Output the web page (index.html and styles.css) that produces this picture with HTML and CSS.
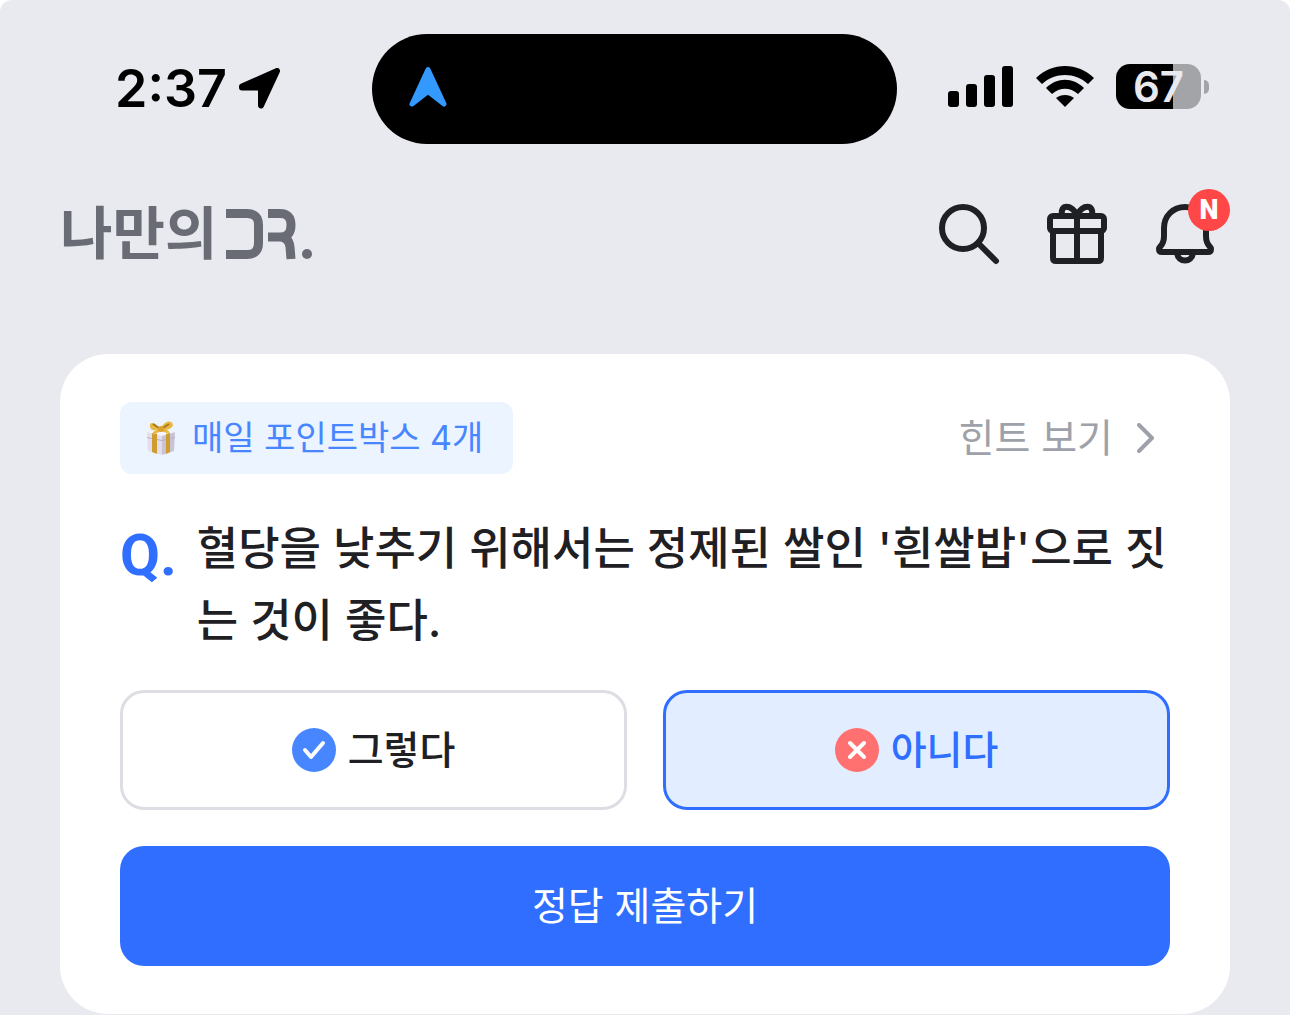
FILE: index.html
```
<!DOCTYPE html>
<html lang="ko">
<head>
  <meta charset="utf-8">
  <title>나만의DR.</title>
  <meta name="viewport" content="width=device-width, initial-scale=1.0">
  <link rel="stylesheet" href="styles.css">
</head>
<body>
  <div class="status-bar">
    <div class="status-left">
      <span class="time">2:37</span>
      <svg class="location" width="42" height="42" viewBox="0 0 42 42"><path d="M3 18.500 38 3 22 37.500V19.500H3z" fill="#000" stroke="#000" stroke-width="6" stroke-linejoin="round"/></svg>
    </div>
    <div class="island">
      <svg width="38" height="42" viewBox="0 0 38 42"><path d="M19 3.500 3 38 19 25.500 35 38z" fill="#3399ff" stroke="#3399ff" stroke-width="5" stroke-linejoin="round"/></svg>
    </div>
    <div class="status-right">
      <svg width="66" height="42" viewBox="0 0 66 42">
        <rect x="0" y="25" width="11" height="16" rx="3"/>
        <rect x="18" y="18" width="11" height="23" rx="3"/>
        <rect x="36" y="9" width="11" height="32" rx="3"/>
        <rect x="54" y="0" width="11" height="41" rx="3"/>
      </svg>
      <svg class="wifi" width="58" height="42" viewBox="0 0 58 42">
        <path d="M0 12C16-4 42-4 58 12L52 18C39 6 19 6 6 18z"/>
        <path d="M10 22C21 11 37 11 48 22L42 28C34 21 24 21 16 28z"/>
        <path d="M20 32C25 28 33 28 38 32L29 41z"/>
      </svg>
      <div class="battery"><span>67</span></div>
      <div class="battery-tip"></div>
    </div>
  </div>

  <header class="header">
    <a class="logo" href="#" aria-label="나만의DR.">
      <span>나만의</span>
      <svg width="90" height="56" viewBox="0 0 90 56" fill="none" stroke="#696c75" stroke-width="9">
        <path d="M2 7.500H23Q34.500 7.500 34.500 19V37Q34.500 48.500 23 48.500H2"/>
        <path d="M44 7.500H56Q67 7.500 67 19Q67 31 56 31H44M55 31Q65 31 66 41L67 53"/>
        <circle cx="83" cy="48" r="5" fill="#696c75" stroke="none"/>
      </svg>
    </a>
    <nav class="header-icons">
      <button class="icon-btn" aria-label="검색">
        <svg width="72" height="72" viewBox="0 0 72 72"><circle cx="30" cy="30" r="21"/><path d="M45 45 63 63"/></svg>
      </button>
      <button class="icon-btn" aria-label="선물">
        <svg width="72" height="72" viewBox="0 0 72 72">
          <rect x="9" y="18" width="54" height="15" rx="3"/>
          <path d="M12 33V60Q12 63 15 63H57Q60 63 60 60V33M36 18V63M21 17C19 6 30 6 36 17M51 17C53 6 42 6 36 17"/>
        </svg>
      </button>
      <button class="icon-btn" aria-label="알림">
        <svg width="72" height="72" viewBox="0 0 72 72">
          <path d="M36 9C24 9 15 18 15 30V38C15 48 10 48 10 51Q10 54 13 54H59Q62 54 62 51C62 48 57 48 57 38V30C57 18 48 9 36 9z"/>
          <path d="M28 55C29 65 43 65 44 55"/>
        </svg>
        <span class="badge">N</span>
      </button>
    </nav>
  </header>

  <main class="quiz-card">
    <div class="quiz-top">
      <div class="point-chip">
        <svg width="30" height="36" viewBox="0 0 30 36">
          <path d="M1 12 16 15V35L2 31z" fill="#e2ddef"/>
          <path d="M16 15 29 12 28 31 16 35z" fill="#c9c3d6"/>
          <path d="M1 12 14 10 29 12 16 16z" fill="#f7f5fc"/>
          <path d="M1 17 16 20 29 17V18L16 21 1 18z" fill="#b9b3c6"/>
          <path d="M6 13 11 14V34L6 32zM20 14 24 13V32L20 34z" fill="#cf9d2e"/>
          <path d="M14 9C8 0 1 2 5 9C6 11 10 10 14 9C9 10 6 12 7 15L15 11 24 14C24 11 20 9 16 9C20 11 26 9 27 5C26-1 18 1 15 8z" fill="#e8b842"/>
          <path d="M13 8 7 4M17 8 23 4" stroke="#a87819" stroke-width="2"/>
          <circle cx="15" cy="9" r="3" fill="#d8a32d"/>
        </svg>
        <span>매일 포인트박스 4개</span>
      </div>
      <a class="hint" href="#">힌트 보기
        <svg width="18" height="30" viewBox="0 0 18 30"><path d="M2 2 15 15 2 28"/></svg>
      </a>
    </div>

    <div class="question">
      <span class="q-mark">Q.</span>
      <p>혈당을 낮추기 위해서는 정제된 쌀인 '흰쌀밥'으로 짓는 것이 좋다.</p>
    </div>

    <div class="options">
      <button class="option">
        <svg width="44" height="44" viewBox="0 0 44 44"><circle cx="22" cy="22" r="22" fill="#4886ff"/><path d="M13 22 19 29 31 15"/></svg>
        그렇다
      </button>
      <button class="option selected">
        <svg width="44" height="44" viewBox="0 0 44 44"><circle cx="22" cy="22" r="22" fill="#ff7070"/><path d="M15 15 29 29M29 15 15 29"/></svg>
        아니다
      </button>
    </div>

    <button class="submit">정답 제출하기</button>
  </main>
</body>
</html>
```
FILE: styles.css
```
* {
  box-sizing: border-box;
}
html {
  background: #fff;
}
body {
  margin: 0;
  min-height: 100vh;
  background: #e9eaef;
  border-radius: 12px 12px 0 0;
  color: #1f2024;
  font-family: Inter, "Noto Sans CJK KR", sans-serif;
}
button {
  padding: 0;
  border: 0;
  background: none;
  color: inherit;
  font-family: inherit;
  cursor: pointer;
}
a {
  color: inherit;
  text-decoration: none;
}
svg {
  display: block;
  flex-shrink: 0;
}

/* status bar */
.status-bar {
  display: grid;
  grid-template-columns: 1fr 525px 1fr;
  padding: 34px 21px 0 0;
  color: #000;
  font-weight: 600;
}
.status-left {
  display: flex;
  align-items: center;
  gap: 12px;
  padding-left: 115px;
}
.time {
  font-size: 52px;
  line-height: 60px;
}
.island {
  display: flex;
  align-items: center;
  height: 110px;
  padding: 0 37px 4px;
  border-radius: 55px;
  background: #000;
}
.status-right {
  display: flex;
  align-items: center;
  justify-content: flex-end;
  padding: 0 60px 5px 0;
}
.wifi {
  margin: 0 22px;
}
.battery {
  width: 85px;
  height: 45px;
  border-radius: 14px;
  background: linear-gradient(90deg, #000 67%, #a3a4a8 67%);
  color: #e9eaef;
  font-size: 42px;
  line-height: 45px;
  text-align: center;
}
.battery-tip {
  width: 5px;
  height: 14px;
  margin-left: 3px;
  border-radius: 0 6px 6px 0;
  background: #a3a4a8;
}

/* header */
.header {
  display: flex;
  align-items: center;
  justify-content: space-between;
  padding: 54px 69px 84px 60px;
}
.logo {
  display: flex;
  align-items: center;
  gap: 7px;
  color: #696c75;
  font-size: 57px;
  font-weight: 700;
  line-height: 72px;
}
.header-icons {
  display: flex;
  gap: 36px;
}
.icon-btn {
  position: relative;
}
.icon-btn svg {
  fill: none;
  stroke: #1f2024;
  stroke-width: 6;
  stroke-linecap: round;
  stroke-linejoin: round;
}
.badge {
  position: absolute;
  top: -9px;
  right: -9px;
  width: 42px;
  height: 42px;
  border-radius: 50%;
  background: #ff4747;
  color: #fff;
  font-family: Roboto, sans-serif;
  font-size: 27px;
  font-weight: 900;
  line-height: 42px;
  text-align: center;
}

/* quiz */
.quiz-card {
  display: flex;
  flex-direction: column;
  gap: 36px;
  margin: 0 60px;
  padding: 48px 60px;
  border-radius: 48px;
  background: #fff;
}
.quiz-top {
  display: flex;
  align-items: center;
  justify-content: space-between;
}
.point-chip {
  display: flex;
  align-items: center;
  gap: 16px;
  height: 72px;
  padding: 0 30px 0 26px;
  border-radius: 12px;
  background: #ebf4ff;
  color: #4886ff;
  font-size: 34px;
  line-height: 48px;
}
.hint {
  display: flex;
  align-items: center;
  gap: 24px;
  padding-right: 15px;
  color: #9ea1a9;
  font-size: 39px;
  line-height: 48px;
}
.hint svg {
  fill: none;
  stroke: #9ea1a9;
  stroke-width: 4;
  stroke-linecap: round;
  stroke-linejoin: round;
}
.question {
  display: flex;
  gap: 20px;
  margin: 3px 0 -3px;
  font-size: 45px;
  font-weight: 500;
  line-height: 72px;
}
.question p {
  flex: 1;
  margin: 0;
  word-break: break-all;
}
.q-mark {
  color: #2f6eff;
  font-family: Roboto, sans-serif;
  font-size: 58px;
  font-weight: 700;
  line-height: 84px;
}
.options {
  display: grid;
  grid-template-columns: 1fr 1fr;
  gap: 36px;
}
.option {
  display: flex;
  align-items: center;
  justify-content: center;
  gap: 12px;
  height: 120px;
  border: 3px solid #dddee3;
  border-radius: 24px;
  font-size: 39px;
  font-weight: 500;
  line-height: 48px;
}
.option path {
  fill: none;
  stroke: #fff;
  stroke-width: 4;
  stroke-linecap: round;
  stroke-linejoin: round;
}
.option.selected {
  border-color: #2f6eff;
  background: #e2eeff;
  color: #2f6eff;
}
.submit {
  height: 120px;
  border-radius: 24px;
  background: #2f6eff;
  color: #fff;
  font-size: 39px;
  line-height: 48px;
}
```
